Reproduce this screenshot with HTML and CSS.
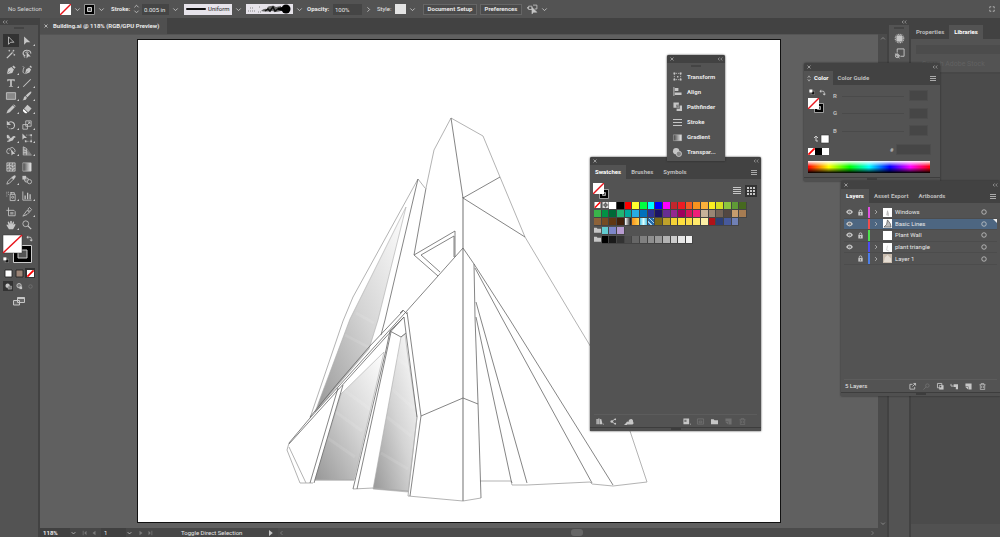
FILE: index.html
```
<!DOCTYPE html>
<html lang="en">
<head>
<meta charset="utf-8">
<title>Building.ai</title>
<link rel="stylesheet" href="styles.css">
</head>
<body>
<svg class="defs" aria-hidden="true">
  <defs>
    <linearGradient id="g-shade" x1="1" y1="0" x2="0" y2="1"><stop offset="0" stop-color="#fff"/><stop offset=".5" stop-color="#d4d4d4"/><stop offset="1" stop-color="#979797"/></linearGradient>
    <linearGradient id="g-btn"><stop offset="0" stop-color="#444"/><stop offset="1" stop-color="#eee"/></linearGradient>
    <symbol id="i-chev" viewBox="0 0 8 8"><path d="M1.5 2.8 4 5.3 6.5 2.8" fill="none" stroke="currentColor"/></symbol>
    <symbol id="i-right" viewBox="0 0 8 8"><path d="M2.8 1.5 5.3 4 2.8 6.5" fill="none" stroke="currentColor"/></symbol>
    <symbol id="i-close" viewBox="0 0 8 8"><path d="m2 2 4 4M6 2 2 6" stroke="currentColor" stroke-width="1.1"/></symbol>
    <symbol id="i-coll" viewBox="0 0 8 8"><path d="M3.5 2 1.5 4l2 2M7 2 5 4l2 2" fill="none" stroke="currentColor"/></symbol>
    <symbol id="i-menu" viewBox="0 0 6 6"><path d="M0 .5h6M0 2.5h6M0 4.5h6" stroke="currentColor"/></symbol>
    <symbol id="i-none" viewBox="0 0 20 20"><path d="M0 0h20v20H0z" fill="#fff"/><path d="M0 20 20 0" stroke="#e8151c" stroke-width="2.6"/></symbol>
    <symbol id="i-none-s" viewBox="0 0 20 20"><path d="M0 0h20v20H0z" fill="#fff"/><path d="M1 19 19 1" stroke="#f00" stroke-width="5"/></symbol>
    <symbol id="i-swap" viewBox="0 0 16 16"><path d="M4 5h5q3 0 3 3v4" fill="none" stroke="currentColor" stroke-width="2"/><path d="M5 1v8L1 5zM8 11h8l-4 4z"/></symbol>
    <symbol id="i-default" viewBox="0 0 16 16"><path d="M6 6h9v9H6z" fill="#111" stroke="#ccc"/><path d="M1 1h8v8H1z" fill="#fff"/></symbol>
    <symbol id="i-eye" viewBox="0 0 16 12"><path d="M0 6q8-11 16 0-8 11-16 0z"/><circle cx="8" cy="6" r="3" fill="#535353"/><circle cx="8" cy="6" r="1.4"/></symbol>
    <symbol id="i-lock" viewBox="0 0 12 16"><path d="M3 8V5q0-3 3-3t3 3v3" fill="none" stroke="currentColor" stroke-width="2"/><path d="M1 7h10v8H1z"/><path d="M6 9v4" stroke="#535353" stroke-width="1.5"/></symbol>
    <symbol id="i-folder" viewBox="0 0 16 12"><path d="M0 1h6l2 2h8v9H0z"/></symbol>
    <symbol id="i-new" viewBox="0 0 16 16"><path d="M1 1h14v14H8V8H1z"/><path d="M1 9h6v6z"/></symbol>
    <symbol id="i-trash" viewBox="0 0 16 16"><path d="M1 4h14M5 4V1h6v3M3 4v11h10V4M6 7v5M10 7v5" fill="none" stroke="currentColor" stroke-width="1.6"/></symbol>
  </defs>
</svg>
<div class="app">
  <header class="control">
    <span class="control-title">No Selection</span>
    <button class="chip" aria-label="Fill"><svg><use href="#i-none"/></svg></button>
    <button class="chev" aria-label="Fill options"><svg><use href="#i-chev"/></svg></button>
    <button class="chip" aria-label="Stroke colour"><svg viewBox="0 0 11 11"><path d="M.5.5h10v10H.5z" fill="#000" stroke="#999"/><path d="M3.500 3.500h4v4h-4z" fill="#555" stroke="#ccc"/></svg></button>
    <button class="chev" aria-label="Stroke colour options"><svg><use href="#i-chev"/></svg></button>
    <label class="lab lab-stroke" for="stroke">Stroke:</label>
    <svg class="spin" viewBox="0 0 8 12"><path d="M1.5 4 4 1.5 6.500 4M1.500 8 4 10.500 6.500 8" fill="none" stroke="currentColor"/></svg>
    <input class="field field-stroke" id="stroke" value="0.005 in">
    <button class="chev" aria-label="Stroke weights"><svg><use href="#i-chev"/></svg></button>
    <span class="profile"><svg viewBox="0 0 20 4"><path d="M1 2h18" stroke="#111" stroke-width="2" stroke-linecap="round"/></svg><select aria-label="Width profile"><option>Uniform</option></select></span>
    <button class="chev" aria-label="Profiles"><svg><use href="#i-chev"/></svg></button>
    <button class="brush" aria-label="Brush definition"><svg viewBox="0 0 47 10"><path d="M2 7h8M4 4h3M12 8h4M13 3h1" stroke="#888" stroke-dasharray="1 1"/><path d="M15 7q3-3 6-2 0-3 4-3 2-1 5 1l5-1v5l-5 1-4-1q-5 1-11 0z" fill="#666"/><path d="m19 7 3-2 2 2 3-4 2 4 4-3" stroke="#111" fill="none" stroke-width="1.500"/><path d="M32 4 36 3v4l-4-1z"/><circle cx="40" cy="5" r="4.500"/></svg></button>
    <button class="chev" aria-label="Brushes"><svg><use href="#i-chev"/></svg></button>
    <label class="lab lab-opacity" for="opacity">Opacity:</label>
    <input class="field field-opacity" id="opacity" value="100%">
    <button class="chev" aria-label="Opacity slider"><svg><use href="#i-right"/></svg></button>
    <span class="lab lab-style">Style:</span>
    <button class="chip style-chip" aria-label="Graphic style"></button>
    <button class="chev" aria-label="Styles"><svg><use href="#i-chev"/></svg></button>
    <button class="btn btn-doc">Document Setup</button>
    <button class="btn btn-pref">Preferences</button>
    <button class="chip" aria-label="Select similar"><svg viewBox="0 0 20 20" fill="none" stroke="currentColor"><path d="M3 4h6v6H3zM11 2h7v7h-4" stroke-width="1.500"/><path d="M0 7h3" stroke-width="2"/><path d="M9 6v12l3-3h6z" fill="currentColor"/></svg></button>
    <button class="chev" aria-label="Select options"><svg><use href="#i-chev"/></svg></button>
    <button class="chip dots" aria-label="Arrange"><svg viewBox="0 0 8 8" fill="none" stroke="currentColor"><path d="M1 3V1h2M5 1h2v2M7 5v2H5M3 7H1V5"/></svg></button>
  </header>

  <div class="work">
    <aside class="tools">
      <div class="cap"><svg><use href="#i-coll"/></svg></div>
      <div class="grip"></div>
      <div class="tool-groups">
        <div class="tgroup">
          <button class="on" aria-label="Selection"><svg viewBox="0 0 24 24"><path d="M6 2v18l5-5h8z" fill="none" stroke="currentColor" stroke-width="2"/></svg></button>
          <button class="more" aria-label="Direct selection"><svg viewBox="0 0 24 24"><path d="M5 1v20l6-6h9z"/></svg></button>
          <button aria-label="Magic wand"><svg viewBox="0 0 24 24"><path d="m2 22 13-13" stroke="currentColor" stroke-width="3"/><path d="M8 2v4M6 4h4M18 2v4M16 4h4M20 12v4M18 14h4M14 6l4 4" stroke="currentColor" stroke-width="2"/></svg></button>
          <button aria-label="Lasso"><svg viewBox="0 0 24 24"><path d="M8 17Q1 14 3 8q3-6 10-5 9 1 8 8" fill="none" stroke="currentColor" stroke-width="2.500"/><path d="M7 14q-4 3 0 7M8 9q4-4 8-1" fill="none" stroke="currentColor" stroke-width="2"/><path d="m11 7 10 11h-6l-4 5z"/></svg></button>
        </div>
        <div class="tgroup">
          <button class="more" aria-label="Pen"><svg viewBox="0 0 24 24"><path d="m2 22 3-13 8-4 6 6-4 8zM15 4l3-3 5 5-3 3z"/><path d="m2 22 8-8" stroke="#535353"/></svg></button>
          <button aria-label="Curvature"><svg viewBox="0 0 24 24"><path d="m7 22 3-12 7-4 5 5-4 7zM18 4l2-3 4 4-2 2z"/><path d="M2 3q5 2 1 8-3 7 3 10" fill="none" stroke="currentColor" stroke-width="2"/><path d="m7 22 7-8" stroke="#535353"/></svg></button>
          <button class="more" aria-label="Type"><svg viewBox="0 0 24 24"><path d="M3 3h18v5h-2l-1-2h-4v13l3 1v1H7v-1l3-1V6H6L5 8H3z"/></svg></button>
          <button class="more" aria-label="Line segment"><svg viewBox="0 0 24 24"><path d="M3 21 21 3" stroke="currentColor" stroke-width="2.500"/></svg></button>
          <button class="more" aria-label="Rectangle"><svg viewBox="0 0 24 24"><path d="M1 4h22v16H1z" fill="#888" stroke="currentColor" stroke-width="2"/></svg></button>
          <button class="more" aria-label="Paintbrush"><svg viewBox="0 0 24 24"><path d="M22 1q3 2-9 14l-4-4Q20 0 22 1zM8 12l4 4q-2 7-11 6 4-2 3-5 1-4 4-5z"/></svg></button>
          <button class="more" aria-label="Pencil"><svg viewBox="0 0 24 24"><path d="m1 23 3-8L16 3l5 5L9 20zM17 2l2-1 4 4-1 2z"/></svg></button>
          <button class="more" aria-label="Eraser"><svg viewBox="0 0 24 24"><path d="M13 2 23 11l-8 9-10-9z"/><path d="m4 12 9 9q-5 3-8-1-5-4-1-8z" fill="#fff"/></svg></button>
        </div>
        <div class="tgroup">
          <button class="more" aria-label="Rotate"><svg viewBox="0 0 24 24"><path d="M5 8q5-6 12-2 5 4 3 10-3 6-9 5" fill="none" stroke="currentColor" stroke-width="2.500"/><path d="M2 2v10h10z"/><path d="M9 21q-6-1-6-8" stroke="currentColor" stroke-width="2" stroke-dasharray="2 2" fill="none"/></svg></button>
          <button class="more" aria-label="Scale"><svg viewBox="0 0 24 24" fill="none" stroke="currentColor" stroke-width="2"><path d="M9 2h13v13H9zM2 11h11v11H2zM12 12l7-7M14 5h5v5"/></svg></button>
          <button class="more" aria-label="Width"><svg viewBox="0 0 24 24"><path d="M2 5q6-3 7 4 1 5 5 2 3-5 8-3l1 3q-4-1-5 4-1 4-6 4l-4 2q-5 1-6-2 6 0 5-4-6-1-5-8z"/><path d="m2 13 8 1M4 3l8 7" stroke="#535353" stroke-width="1.500"/></svg></button>
          <button class="more" aria-label="Free transform"><svg viewBox="0 0 24 24"><path d="M1 1v15l4-4h7z"/><path d="M10 5h12v15H8v-4" fill="none" stroke="currentColor" stroke-width="1.500" stroke-dasharray="2 1.500"/><path d="M7 18h4v4H7zM20 18h4v4h-4zM20 3h4v4h-4z"/></svg></button>
          <button class="more" aria-label="Shape builder"><svg viewBox="0 0 24 24"><path d="M8 18Q0 18 2 11q1-6 7-5 6-6 11 1 3 4 1 8" fill="none" stroke="currentColor" stroke-width="2"/><path d="M8 10q6-4 6 5" stroke="currentColor" fill="none" stroke-width="2"/><path d="m13 9 9 10h-5l-4 4z"/></svg></button>
          <button class="more" aria-label="Perspective grid"><svg viewBox="0 0 24 24"><path d="M3 2v20h20z" fill="#888"/><path d="M3 2v20M3 2l8 4v16M3 9l8 3M3 16h8" fill="none" stroke="currentColor" stroke-width="2"/><path d="M11 6l12 16H3" fill="none" stroke="#999" stroke-width="1.500"/></svg></button>
        </div>
        <div class="tgroup">
          <button aria-label="Mesh"><svg viewBox="0 0 24 24"><path d="M2 2h20v20H2z" fill="#777"/><path d="M2 2h20v20H2zM2 9q6-4 10 0t10-1M2 16q6-4 10 0t10-1M9 2q-3 6 0 10t-1 10M16 2q-3 6 0 10t-1 10" fill="none" stroke="#ddd" stroke-width="1.500"/></svg></button>
          <button aria-label="Gradient"><svg viewBox="0 0 24 24"><path d="M2 2h20v20H2z" fill="url(#g-btn)" stroke="currentColor" stroke-width="1.500"/></svg></button>
          <button class="more" aria-label="Eyedropper"><svg viewBox="0 0 24 24"><path d="M2 22 4 16 13 7l4 4-9 9z" fill="none" stroke="currentColor" stroke-width="2"/><path d="m12 5 3-1q6-6 8-2 2 3-3 7l-1 3z"/></svg></button>
          <button aria-label="Blend"><svg viewBox="0 0 24 24"><path d="M1 2h9v9H1z"/><circle cx="11" cy="12" r="5" fill="#777" stroke="currentColor" stroke-width="2"/><circle cx="18" cy="16" r="5" fill="#535353" stroke="currentColor" stroke-width="2"/></svg></button>
        </div>
        <div class="tgroup">
          <button class="more" aria-label="Symbol sprayer"><svg viewBox="0 0 24 24"><path d="M1 3h2M5 3h2M1 7h2M5 8h2M1 12h2" stroke="currentColor" stroke-width="2"/><path d="M10 8h12v15H10zM12 8V4h8v4M10 4h4" fill="none" stroke="currentColor" stroke-width="2"/><circle cx="16" cy="15" r="2.500" fill="none" stroke="currentColor" stroke-width="2"/></svg></button>
          <button class="more" aria-label="Column graph"><svg viewBox="0 0 24 24"><path d="M2 1v21h21" fill="none" stroke="currentColor" stroke-width="2"/><path d="M6 11h3v9H6zM12 4h3v16h-3zM18 8h3v12h-3z"/></svg></button>
        </div>
        <div class="tgroup">
          <button aria-label="Artboard"><svg viewBox="0 0 24 24"><path d="M6 1v20h16V11l-3-3H1" fill="none" stroke="currentColor" stroke-width="2"/><path d="M10 12h8v6h-8z" opacity=".6"/></svg></button>
          <button class="more" aria-label="Slice"><svg viewBox="0 0 24 24"><path d="M2 22 12 8l6 4q-4 7-16 10zM14 5l4-4 5 5-4 5z" fill="none" stroke="currentColor" stroke-width="2"/></svg></button>
          <button class="more" aria-label="Hand"><svg viewBox="0 0 24 24"><path d="M7 22 1 12q1-3 5 1L4 5q2-3 4 1l2 4V3q2-3 4 0v7l3-6q3-1 2 3l-1 5 3-3q3 0 1 4l-5 9z"/></svg></button>
          <button aria-label="Zoom tool"><svg viewBox="0 0 24 24" fill="none" stroke="currentColor"><circle cx="9" cy="9" r="7" stroke-width="2"/><path d="m14 14 8 8" stroke-width="3"/></svg></button>
        </div>
      </div>
      <div class="paint">
        <svg viewBox="0 0 38 32"><path d="M13.500 11.500h18v17h-18z" fill="#000" stroke="#ccc"/><path d="M18 16h9v8h-9z" fill="#535353" stroke="#ccc"/><path d="M3 1h19v18H3z" fill="#fff" stroke="#333" stroke-width=".5"/><path d="M3 19 22 1" stroke="#e8151c" stroke-width="1.500"/><use href="#i-swap" x="26" y="1" width="7" height="7"/><use href="#i-default" x="3" y="23" width="6" height="6"/></svg>
      </div>
      <div class="trio">
        <button aria-label="Color"><svg viewBox="0 0 8 8"><path d="M0 0h8v8H0z" fill="#fff" stroke="#222"/></svg></button>
        <button aria-label="Gradient fill"><svg viewBox="0 0 8 8"><path d="M0 0h8v8H0z" fill="#9c8577" stroke="#222"/></svg></button>
        <button class="on" aria-label="None"><svg><use href="#i-none-s"/></svg></button>
      </div>
      <div class="trio">
        <button class="on" aria-label="Draw normal"><svg viewBox="0 0 16 16"><circle cx="6" cy="6" r="5"/><path d="M7 7h8v7H7z" fill="#777" stroke="currentColor"/></svg></button>
        <button aria-label="Draw behind"><svg viewBox="0 0 16 16"><circle cx="7" cy="6" r="5" fill="#777" stroke="currentColor" stroke-width="2"/><path d="M8 8h6v6H8z"/></svg></button>
        <button class="dim" aria-label="Draw inside"><svg viewBox="0 0 16 16"><circle cx="8" cy="8" r="4" fill="none" stroke="currentColor" stroke-width="2"/></svg></button>
      </div>
      <button class="screen" aria-label="Screen mode"><svg viewBox="0 0 24 18"><path d="M1 7h12v9H1zM9 1h14v10H9z" fill="#666" stroke="currentColor" stroke-width="2"/><path d="M9 2.500h14" stroke="currentColor" stroke-width="3"/></svg></button>
    </aside>

    <main class="doc">
      <div class="doc-tabs"><div class="doc-tab"><button class="x" aria-label="Close"><svg><use href="#i-close"/></svg></button>Building.ai @ 118% (RGB/GPU Preview)</div></div>
      <div class="canvas-row">
        <div class="canvas"><div class="artboard">
          <svg viewBox="138 40 642 482" fill="none">
            <g fill="url(#g-shade)" stroke="#aaa" stroke-width=".6">
              <path d="m406 207-56 112-35 93 54-63 9-29z"/><path d="m315 480 26-86 43-42-30 128z"/><path d="m373 489 28-152 4-3 2 16 10 67-9 75z"/>
            </g>
            <g stroke="#fff" stroke-width="3" opacity=".1"><path d="m356 313 18 10M345 335l25 13M341 388l33 24M333 410l29 21M326 437l29 20M396 357l12 10M393 390l20 18M387 417l24 19M381 453l27 16"/></g>
            <g stroke="#aaa" stroke-width=".9">
              <path d="m451 118-17 32-8 38M451 118l32 18 17 41 25 60 49 82 38 63 18 49 17 51-34 4-21-2-2-2-63 3h-15l-1-4h-31M425 188l-7-9-65 118-10 24-33 97M289 443l-2 7 13 33h13M289 447l17 36M315 480h39M353 489l20-1 35 3M408 496l55 5 18-3M417 417l-9 79"/>
              <path d="M463 197v304" stroke="#888" stroke-width="1.200"/>
            </g>
            <g stroke="#666" stroke-width=".8">
              <path d="m451 118 12 80 37-21M463 198l62 39M426 188l-12 67 41-24v26M414 255l24 21M440 272l-19-17 33-19v21M418 179l-33 141-4 15M463 248l-58 65-95 105-21 25M463 248l11 16 36 56 103 165M475 268l28 52 89 163M474 264l1 53 3 86 3 95M476 302l5 18 46 163M476 317l35 163 1 3M404 317 289 444M403 311l-34 36-31 36-28 34M400 313l3-3 4 4M310 483l28-95M314 483l29-98M353 489l33-139 4-19 14-14 2 16 11 84M357 489l34-157M390 331l11 6 5-4M407 312l14 104-11 80M421 416l42-18 15 6"/>
            </g>
          </svg>
        </div></div>
        <div class="vscroll"><svg class="flip"><use href="#i-chev"/></svg><svg><use href="#i-chev"/></svg></div>
      </div>
      <footer class="status">
        <select class="zoom" aria-label="Zoom level"><option>118%</option></select><svg><use href="#i-chev"/></svg>
        <span class="nav" aria-hidden="true"><svg viewBox="0 0 8 8"><path d="M1 1h1v6H1zM6 1v6L3 4z"/></svg><svg viewBox="0 0 8 8"><path d="M6 1v6L2 4z"/></svg></span>
        <select class="board" aria-label="Artboard number"><option>1</option></select><svg><use href="#i-chev"/></svg>
        <span class="nav" aria-hidden="true"><svg viewBox="0 0 8 8"><path d="M2 1v6l4-3z"/></svg><svg viewBox="0 0 8 8"><path d="M2 1v6l3-3zM6 1h1v6H6z"/></svg></span>
        <span class="hint">Toggle Direct Selection</span>
        <svg class="play" viewBox="0 0 8 8"><path d="M2 0v8l5-4z"/></svg>
        <div class="hscroll"><svg class="back"><use href="#i-right"/></svg><span class="thumb"></span><svg><use href="#i-right"/></svg></div>
      </footer>
    </main>

    <aside class="strip">
      <div class="cap cap-right"><svg><use href="#i-coll"/></svg></div>
      <div class="grip"></div>
      <button aria-label="Appearance"><svg viewBox="0 0 24 24"><circle cx="12" cy="12" r="7"/><circle cx="12" cy="12" r="9" fill="none" stroke="currentColor" stroke-width="3" stroke-dasharray="2 1.500"/></svg></button>
      <button aria-label="Graphic styles"><svg viewBox="0 0 24 24" fill="none" stroke="currentColor" stroke-width="2"><path d="M7 10V2h15v16h-8"/><circle cx="7" cy="17" r="4"/><path d="m2 12 10 10M7 12v5h6"/></svg></button>
    </aside>
    <aside class="dock">
      <div class="cap"></div>
      <div class="tabs"><button>Properties</button><button class="on">Libraries</button></div>
      <div class="library"><input aria-label="Search libraries"><p>Search Adobe Stock</p></div>
      <div class="dock-body"></div><div class="dock-foot"></div>
    </aside>
  </div>

  <section class="win quick" aria-label="Panels">
    <div class="cap"><button aria-label="Close"><svg><use href="#i-close"/></svg></button><svg><use href="#i-coll"/></svg></div>
    <div class="grip"></div>
    <nav>
      <button><svg viewBox="0 0 20 20"><path d="M3 3h14v14H3z" fill="none" stroke="currentColor" stroke-width="2" stroke-dasharray="2 2"/><path d="M1 1h4v4H1zM15 1h4v4h-4zM1 15h4v4H1zM15 15h4v4h-4zM9 9h3v3H9z"/></svg>Transform</button>
      <button><svg viewBox="0 0 20 20"><path d="M1 0h2v20H1zM4 2h8v7H4zM4 12h15v6H4z"/></svg>Align</button>
      <button><svg viewBox="0 0 20 20"><path d="M1 1h12v5H7v7H1zM15 8h5v12H8v-5h7z"/><path d="M8 8h5v5H8z" fill="#777" stroke="currentColor"/></svg>Pathfinder</button>
      <button><svg viewBox="0 0 9 9"><path d="M0 1.500h9M0 4.500h9M0 7.500h9" stroke="currentColor"/></svg>Stroke</button>
      <button><svg viewBox="0 0 20 20"><path d="M1 4h18v13H1z" fill="url(#g-btn)" stroke="currentColor"/></svg>Gradient</button>
      <button><svg viewBox="0 0 20 20"><circle cx="7" cy="7" r="7"/><circle cx="13" cy="13" r="6" fill="#888" stroke="#ddd" stroke-width="1.500"/></svg>Transpar...</button>
    </nav>
  </section>

  <section class="win swatches" aria-label="Swatches">
    <div class="cap"><button aria-label="Close"><svg><use href="#i-close"/></svg></button><svg><use href="#i-coll"/></svg></div>
    <div class="tabs"><button class="on">Swatches</button><button>Brushes</button><button>Symbols</button><svg class="menu"><use href="#i-menu"/></svg></div>
    <div class="sw-head">
      <svg class="pair" viewBox="0 0 16 16"><path d="M6.500 6.500h9v9h-9z" fill="#000" stroke="#bbb" stroke-width=".8"/><path d="M9.500 9.500h3v3h-3z" fill="#535353" stroke="#bbb" stroke-width=".8"/><use href="#i-none" width="11" height="11"/></svg>
      <button aria-label="List view"><svg viewBox="0 0 8 8"><path d="M0 .5h8M0 2.500h8M0 4.500h8M0 6.500h8" stroke="currentColor"/></svg></button>
      <button class="on" aria-label="Thumbnail view"><svg viewBox="0 0 8 8"><path d="M0 0h2v2H0zM3 0h2v2H3zM6 0h2v2H6zM0 3h2v2H0zM3 3h2v2H3zM6 3h2v2H6zM0 6h2v2H0zM3 6h2v2H3zM6 6h2v2H6z"/></svg></button>
    </div>
    <div class="sw-body" id="swatch-rows"></div>
    <div class="win-foot sw-foot">
      <svg viewBox="0 0 16 16"><path d="M1 2h3v12H1zM5 1h3v13H5zM9 3l3-1 3 12H9zM16 13h2v2h-2z"/></svg>
      <svg viewBox="0 0 16 16"><path d="M12 2 4 8l8 6" fill="none" stroke="currentColor" stroke-width="2"/><circle cx="4" cy="8" r="3"/><circle cx="12" cy="3" r="2"/><circle cx="12" cy="13" r="2"/></svg>
      <svg class="wide" viewBox="0 0 20 14"><path d="M6 13q-3-2-1-5 2-2 4 0 0-6 6-6 4 1 3 5 3 5-2 6zM0 14l6-6v6z"/></svg>
      <svg class="push" viewBox="0 0 16 16"><path d="M1 1h13v13H1zM16 13h2v2h-2z"/><path d="M3 4h5v5H3z" fill="#777"/></svg>
      <svg class="dim" viewBox="0 0 16 16"><path d="M1 2h14v12H1zM5 7h6v4H5z" fill="none" stroke="currentColor" stroke-width="2"/></svg>
      <svg><use href="#i-folder"/></svg><svg class="dim"><use href="#i-new"/></svg><svg class="dim"><use href="#i-trash"/></svg>
    </div>
    <div class="edge"></div>
  </section>

  <section class="win color" aria-label="Color">
    <div class="cap"><button aria-label="Close"><svg><use href="#i-close"/></svg></button><svg><use href="#i-coll"/></svg></div>
    <div class="tabs"><button class="on"><svg viewBox="0 0 6 10"><path d="m1 4 2-3 2 3M1 6l2 3 2-3" fill="none" stroke="currentColor"/></svg>Color</button><button>Color Guide</button><svg class="menu"><use href="#i-menu"/></svg></div>
    <div class="color-main">
      <svg class="color-side" viewBox="0 0 24 68"><use href="#i-default" x="1" y="2" width="6" height="6"/><use href="#i-swap" x="11" y="2" width="7" height="7"/><path d="M6.500 16.500h9v9h-9z" fill="#000" stroke="#bbb" stroke-width=".8"/><path d="M9.500 19.500h3v3h-3z" fill="#535353" stroke="#bbb" stroke-width=".8"/><use href="#i-none" x="0" y="11" width="11" height="11"/><path d="M13 48h8v8h-8z" fill="#fff" stroke="#333" stroke-width=".6"/><path d="M10 54H8v-4M6 51l2-2 2 2" fill="none" stroke="#ccc"/><use href="#i-none-s" y="61" width="7" height="7"/><path d="M7 61h7v7H7z" fill="#000"/><path d="M14 61h7v7h-7z" fill="#fff"/></svg>
      <div class="channels">
        <label><span>R</span><i></i><input aria-label="Red"></label>
        <label><span>G</span><i></i><input aria-label="Green"></label>
        <label><span>B</span><i></i><input aria-label="Blue"></label>
        <label class="hex"><span>#</span><input aria-label="Hex"></label>
      </div>
    </div>
    <div class="spectrum"></div>
    <div class="edge"></div>
  </section>

  <section class="win layers" aria-label="Layers">
    <div class="cap"><button aria-label="Close"><svg><use href="#i-close"/></svg></button><svg><use href="#i-coll"/></svg></div>
    <div class="tabs"><button class="on">Layers</button><button>Asset Export</button><button>Artboards</button><svg class="menu"><use href="#i-menu"/></svg></div>
    <ul class="layer-list">
      <li><svg><use href="#i-eye"/></svg><svg class="lock"><use href="#i-lock"/></svg><b class="magenta"></b><svg class="arrow"><use href="#i-right"/></svg><svg class="thumb" viewBox="0 0 10 10"><path d="m4 8 1-5 1 3v3" fill="#ccc" stroke="#999" stroke-width=".5"/></svg><span>Windows</span><svg class="target" viewBox="0 0 8 8"><circle cx="4" cy="4" r="3"/></svg></li>
      <li class="sel"><svg><use href="#i-eye"/></svg><i></i><b class="red"></b><svg class="arrow"><use href="#i-right"/></svg><svg class="thumb" viewBox="0 0 10 10"><path d="m1 9 3-3 1-5 3 4 1 4z" fill="#bbb" stroke="#444" stroke-width=".7"/></svg><span>Basic Lines</span><svg class="target" viewBox="0 0 8 8"><circle cx="4" cy="4" r="3"/></svg></li>
      <li><svg><use href="#i-eye"/></svg><svg class="lock"><use href="#i-lock"/></svg><b class="green"></b><i class="arrow"></i><svg class="thumb"></svg><span>Plant Wall</span><svg class="target" viewBox="0 0 8 8"><circle cx="4" cy="4" r="3"/></svg></li>
      <li><svg><use href="#i-eye"/></svg><i></i><b class="indigo"></b><svg class="arrow"><use href="#i-right"/></svg><svg class="thumb" viewBox="0 0 10 10"><path d="m5 3-1 5 3 1" fill="none" stroke="#aaa" stroke-width=".5"/></svg><span>plant triangle</span><svg class="target" viewBox="0 0 8 8"><circle cx="4" cy="4" r="3"/></svg></li>
      <li><i></i><svg class="lock"><use href="#i-lock"/></svg><b class="blue"></b><svg class="arrow"><use href="#i-right"/></svg><svg class="thumb" viewBox="0 0 10 10"><path d="M0 0h10v10H0z" fill="#c9bcae"/><path d="m1 9 1-5 3-3 4 4v4z" fill="#e5ddd3"/></svg><span>Layer 1</span><svg class="target" viewBox="0 0 8 8"><circle cx="4" cy="4" r="3"/></svg></li>
    </ul>
    <div class="layer-space"></div>
    <div class="win-foot layer-foot"><span>5 Layers</span>
      <svg viewBox="0 0 16 16" fill="none" stroke="currentColor" stroke-width="2"><path d="M8 3H2v11h11V9M8 8l7-7M10 1h5v5"/></svg>
      <svg class="dim" viewBox="0 0 16 16" fill="none" stroke="currentColor" stroke-width="2"><circle cx="10" cy="6" r="4"/><path d="m7 9-6 6"/></svg>
      <svg viewBox="0 0 16 16"><path d="M1 1h10v10H1z" fill="none" stroke="currentColor" stroke-width="2"/><path d="M5 5h10v10H5z"/><circle cx="8" cy="8" r="2" fill="#535353"/></svg>
      <svg viewBox="0 0 16 16"><path d="M0 2v5h6" fill="none" stroke="currentColor" stroke-width="2"/><path d="M6 3h10v11h-5V9H6z"/></svg>
      <svg><use href="#i-new"/></svg><svg><use href="#i-trash"/></svg>
    </div>
    <div class="edge"></div>
  </section>
</div>
<script src="script.js"></script>
</body>
</html>
```
FILE: styles.css
```
* { box-sizing: border-box; }
body { margin: 0; overflow: hidden; background: #424242; color: #e8e8e8; font: 6px/8px Roboto, "Open Sans", sans-serif; }
button, input, select { margin: 0; padding: 0; border: 0; border-radius: 0; background: none; color: inherit; font: inherit; appearance: none; outline: 0; }
button { display: flex; align-items: center; justify-content: center; }
svg { display: block; width: 8px; height: 8px; flex: none; color: #c6c6c6; overflow: visible; }
svg:not([fill]) { fill: currentColor; }
.defs { position: absolute; width: 0; height: 0; }
.app { position: relative; display: flex; flex-direction: column; height: 100vh; }

.control { display: flex; align-items: center; height: 18px; flex: none; padding-left: 8px; background: #535353; white-space: nowrap; }
.control-title { width: 52px; color: #d6d6d6; }
.chip { width: 11px; height: 11px; flex: none; }
.chip svg { width: 11px; height: 11px; }
.chev { width: 13px; height: 11px; flex: none; }
.chev svg { width: 7px; height: 7px; }
.lab { flex: none; font-weight: 700; }
.lab-stroke { width: 22px; margin-left: 3px; }
.spin { width: 7px; height: 10px; margin-right: 2px; }
.field { height: 11px; padding-left: 2px; background: #454545; }
.field-stroke { width: 27px; }
.profile { display: flex; align-items: center; width: 48px; height: 11px; margin-left: 2px; padding-left: 2px; background: #e6e3ea; }
.profile svg { width: 20px; height: 4px; margin-right: 2px; }
.profile select { flex: 1; color: #222; }
.brush { width: 47px; height: 10px; margin-left: 1px; background: #e6e3ea; }
.brush svg { width: 47px; height: 10px; fill: #000; }
.lab-opacity { width: 26px; margin-left: 1px; }
.field-opacity { width: 29px; }
.lab-style { width: 18px; margin-left: 2px; font-weight: 400; }
.style-chip { height: 10px; background: #e4e4e4; }
.btn { height: 11px; border: 1px solid #666; background: #4b4b4b; font-weight: 700; }
.btn-doc { width: 54px; margin-left: 4px; }
.btn-pref { width: 42px; margin: 0 5px 0 3px; }
.dots { margin: 0 3px 0 auto; }
.dots svg { width: 6px; height: 6px; }

.work { display: flex; flex: 1; min-height: 0; }
.cap { display: flex; align-items: center; justify-content: space-between; height: 7px; flex: none; padding: 0 2px; background: #424242; }
.cap svg { width: 6px; height: 6px; color: #aaa; }
.cap-right { justify-content: flex-end; }
.grip { width: 10px; height: 2px; flex: none; margin: 2px auto; background: #444; }
.tools { width: 38px; flex: none; background: #535353; }
.tool-groups { display: grid; gap: 3px; padding: 3px 3px 0; }
.tgroup { display: grid; grid-template-columns: 16px 16px; grid-auto-rows: 13px; }
.tgroup button { position: relative; }
.tgroup svg { width: 10px; height: 10px; }
.tools .on { background: #333; }
.more::after { content: ""; position: absolute; right: 0; bottom: 1px; border: 1px solid; border-color: transparent #ccc #ccc transparent; }
.paint { margin-top: 3px; }
.paint svg { width: 38px; height: 32px; }
.trio { display: grid; grid-template-columns: repeat(3, 10px); gap: 1px; margin: 1px 0 0 3px; height: 12px; align-items: center; }
.trio button { height: 10px; }
.trio svg { width: 7px; height: 7px; }
.dim { opacity: .25; }
.screen { width: 38px; height: 14px; margin-top: 2px; }
.screen svg { width: 12px; height: 9px; }

.doc { display: flex; flex-direction: column; flex: 1; min-width: 0; margin: 0 2px; background: #606060; }
.doc-tabs { display: flex; height: 16px; flex: none; background: #424242; }
.doc-tab { display: flex; align-items: center; width: 127px; padding-left: 3px; background: #4f4f4f; font-weight: 700; white-space: nowrap; }
.doc-tab .x { margin-right: 4px; }
.doc-tab svg { width: 6px; height: 6px; }
.canvas-row { display: flex; flex: 1; min-height: 0; }
.canvas { display: flex; flex: 1; min-width: 0; padding: 4px 97px 5px; border-top: 1px solid #555; }
.artboard { flex: 1; min-width: 0; border: 1px solid #111; background: #fff; }
.artboard svg { width: 100%; height: 100%; }
.vscroll { display: flex; flex-direction: column; justify-content: space-between; align-items: center; width: 9px; padding: 1px 0; background: #4b4b4b; }
.vscroll svg { width: 6px; height: 7px; color: #999; }
.flip { transform: rotate(180deg); }
.back { transform: rotate(180deg); }
.status { display: flex; align-items: center; height: 9px; flex: none; background: #474747; }
.status svg { width: 7px; height: 6px; }
.zoom { width: 30px; height: 9px; padding-left: 3px; font-weight: 700; background: #404040; }
.board { width: 25px; height: 9px; padding-left: 3px; background: #404040; }
.nav { display: flex; gap: 3px; width: 24px; padding-left: 5px; opacity: .4; }
.nav svg { width: 6px; height: 6px; }
.hint { width: 106px; margin-left: 4px; padding-left: 20px; white-space: nowrap; }
.play { margin-right: 4px; }
.hscroll { display: flex; flex: 1; align-items: center; justify-content: space-between; padding-right: 11px; background: #4b4b4b; height: 9px; }
.status .hscroll svg { color: #888; }
.hscroll .thumb { width: 12px; height: 7px; border-radius: 3px; background: #666; }

.strip { width: 20px; flex: none; background: #535353; }
.strip button { width: 20px; height: 15px; }
.strip svg { width: 11px; height: 11px; }
.strip .cap svg { width: 6px; height: 6px; }
.dock { display: flex; flex-direction: column; width: 89px; flex: none; margin-left: 2px; background: #535353; }
.tabs { display: flex; height: 14px; flex: none; background: #424242; }
.tabs button { padding: 0 5px; color: #bdbdbd; font-weight: 700; white-space: nowrap; }
.tabs button.on { background: #535353; color: #fff; }
.tabs .menu { width: 6px; height: 6px; margin: 5px 4px 0 auto; color: #aaa; }
.library { height: 35px; padding: 6px 0 0 5px; border-bottom: 2px solid #474747; }
.library input { display: block; width: 100%; height: 9px; background: #4c4c4c; }
.library p { margin: 6px 0; padding-left: 6px; color: #626262; font-size: 7px; }
.dock-body { flex: 1; background: #4b4b4b; }
.dock-foot { height: 13px; background: #515151; }

.win { position: absolute; display: flex; flex-direction: column; background: #535353; border-radius: 2px 2px 0 0; overflow: hidden; box-shadow: 0 0 2px #222; }
.win .cap { height: 8px; }
.edge { height: 4px; flex: none; border-top: 1px solid #3d3d3d; background: linear-gradient(#3d3d3d, #3d3d3d) center top / 10px 2px no-repeat #505050; }
.quick { left: 667px; top: 55px; width: 58px; height: 106px; z-index: 2; }
.quick nav { display: grid; grid-auto-rows: 1fr; flex: 1; padding-bottom: 1px; }
.quick nav button { justify-content: flex-start; padding-left: 6px; font-weight: 700; }
.quick nav svg { width: 9px; height: 9px; margin-right: 5px; }

.swatches { left: 590px; top: 157px; width: 171px; height: 274px; }
.sw-head { display: flex; align-items: center; height: 23px; flex: none; padding: 0 4px 0 3px; }
.pair { width: 16px; height: 16px; margin-right: auto; }
.sw-head button { width: 12px; height: 12px; margin-left: 2px; }
.sw-head .on { background: #333; }
.sw-body { flex: 1; margin: 0 4px; border-bottom: 1px solid #5c5c5c; }
.sw-row { display: grid; grid-template-columns: repeat(20, 1fr); width: 153px; height: 8px; }
.sw-row span { border: solid #444; border-width: 0 1px 1px 0; }
.sw-row.group { height: 9px; padding-top: 1px; }
.sw-row svg { width: 7px; height: 6px; }
.win-foot { display: flex; align-items: center; flex: none; }
.win-foot svg { width: 7px; height: 7px; }
.sw-foot { height: 12px; padding: 0 15px 0 6px; gap: 7px; }
.sw-foot .wide { width: 10px; }
.sw-foot .push { margin-left: auto; }

.color { right: 60px; top: 63px; width: 136px; height: 118px; }
.color .tabs button.on svg { width: 4px; height: 7px; margin-right: 3px; }
.color .tabs button { padding: 0 5px 0 3px; }
.color .tabs button + button { padding-left: 4px; }
.color-main { display: flex; flex: none; height: 75px; padding: 2px 9px 0 4px; }
.color-side { width: 24px; height: 68px; }
.channels { display: flex; flex-direction: column; flex: 1; padding-left: 1px; }
.channels label { display: flex; align-items: center; height: 18px; color: #bbb; font-weight: 700; }
.channels span { width: 9px; }
.channels i { flex: 1; height: 2px; margin-right: 5px; border-bottom: 1px solid #4a4a4a; }
.channels input { width: 19px; height: 11px; margin-right: 3px; border: 1px solid #4d4d4d; background: #464646; }
.channels .hex { justify-content: flex-end; height: 21px; }
.channels .hex span { width: 6px; }
.channels .hex input { width: 35px; margin: 0; }
.spectrum { height: 12px; flex: none; margin: 1px 10px auto 4px; background: linear-gradient(#fff, transparent 45%, transparent 55%, #000), linear-gradient(90deg, red, #ff0 17%, #0f0 34%, #0ff 50%, #00f 67%, #f0f 84%, red); }

.layers { right: 0; top: 181px; width: 159px; height: 215px; }
.layer-list { display: grid; grid-auto-rows: 1fr; height: 58px; flex: none; margin: 4px 3px 0; padding: 0; list-style: none; }
.layer-list li { position: relative; display: flex; align-items: center; gap: 3px; padding-left: 2px; border-bottom: 1px solid #4c4c4c; }
.layer-list li > :first-child { width: 7px; height: 6px; margin-right: 1px; }
.layer-list li > :nth-child(2) { width: 7px; height: 7px; margin-right: 1px; }
.layer-list b { width: 2px; align-self: stretch; }
.layer-list .arrow { width: 6px; height: 6px; }
.layer-list .thumb { width: 9px; height: 9px; margin-left: 1px; background: #fff; }
.layer-list span { flex: 1; }
.layer-list .target { width: 6px; height: 6px; margin-right: 10px; fill: none; stroke: #ccc; }
.layer-list .sel { background: #4d6681; }
.layer-list .sel::after { content: ""; position: absolute; right: 0; top: 0; border: 2px solid; border-color: #eee #eee transparent transparent; }
.magenta { background: #e04fe0; }
.red { background: #f04d4d; }
.green { background: #4de04d; }
.indigo { background: #4d4df0; }
.blue { background: #4d7fe8; }
.layer-space { flex: 1; margin: 0 3px; border-bottom: 1px solid #5c5c5c; }
.layer-foot { height: 12px; padding: 0 14px 0 4px; gap: 7px; }
.layer-foot span { margin-right: auto; }
```
FILE: script.js
```
const rows = [
  ["none-s", "reg", "#fff", "#000", "#f00", "#ffff2e", "#00ff40", "#0ff", "#00f", "#f0f", "#c1272d", "#ed1c24", "#f15a24", "#f7931e", "#fbb03b", "#fcee21", "#d9e021", "#8cc63f", "#5f9a36", "#46691f"],
  ["#39b54a", "#009245", "#006837", "#22b573", "#00a99d", "#29abe2", "#0071bc", "#2e3192", "#1b1464", "#662d91", "#93278f", "#9e005d", "#d4145a", "#ed1e79", "#c7b299", "#998675", "#736357", "#534741", "#c69c6d", "#a67c52"],
  ["#8c6239", "#754c24", "#603813", "#42210b", "linear-gradient(90deg,#fff,#111)", "linear-gradient(90deg,#f7931e,#ffd24d)", "linear-gradient(90deg,#4cc3e8,#dff,#4cc3e8)", "repeating-linear-gradient(45deg,#246aa8 0 2px,#a6d1ec 2px 3px)", "#7c6a17", "#bfa22b", "#f5d336", "#ffe03d", "#fbdc4a", "#ffe96b", "#fdf0a6", "#b01218", "#2e3f75", "#47599b", "#7080b5"],
  ["folder", "#62cbd0", "#7d86c9", "#b79bd0"],
  ["folder", "#000", "#1a1a1a", "#333", "#4d4d4d", "#666", "#808080", "#8f8f8f", "#999", "#b3b3b3", "#ccc", "#e6e6e6", "#f2f2f2"]
];
const host = document.getElementById("swatch-rows");
for (const row of rows) {
  const line = document.createElement("div");
  line.className = row[0] === "folder" ? "sw-row group" : "sw-row";
  for (const value of row) {
    if (value === "folder" || value === "none-s") {
      line.insertAdjacentHTML("beforeend", `<svg><use href="#i-${value}"/></svg>`);
    } else if (value === "reg") {
      line.insertAdjacentHTML("beforeend", `<svg viewBox="0 0 8 8"><path d="M0 0h8v8H0z" fill="#ddd"/><circle cx="4" cy="4" r="2" fill="none" stroke="#333"/><path d="M4 0v8M0 4h8" stroke="#333" stroke-width=".6"/></svg>`);
    } else {
      const cell = document.createElement("span");
      cell.style.background = value;
      line.append(cell);
    }
  }
  host.append(line);
}
```
